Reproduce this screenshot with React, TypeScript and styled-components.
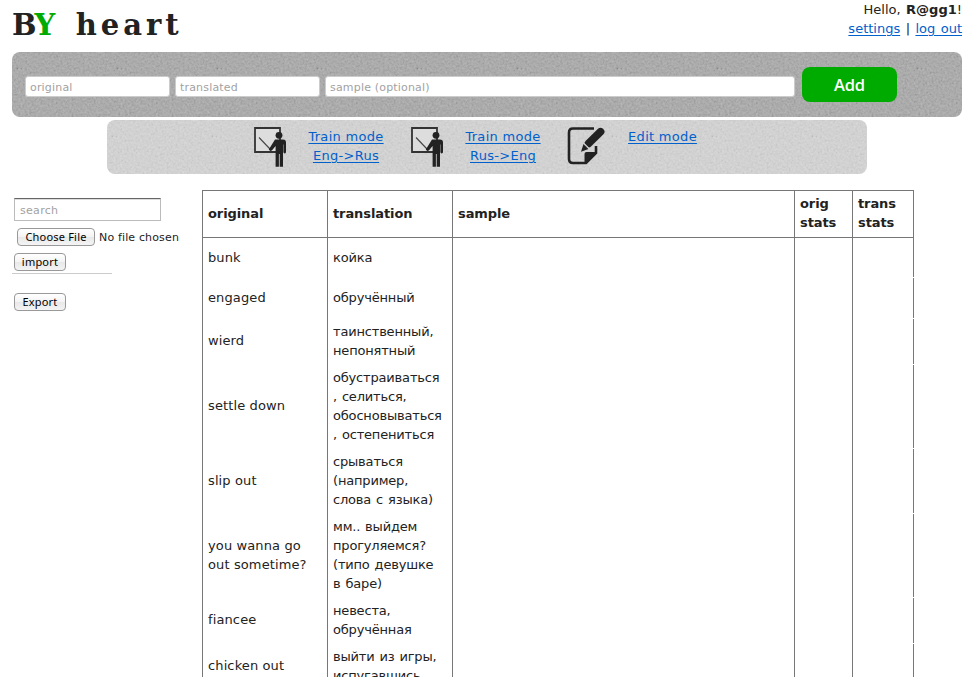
import React from "react";
import styled, { createGlobalStyle } from "styled-components";

const grain = (opacity: number) =>
  `url("data:image/svg+xml,${encodeURIComponent(
    `<svg xmlns='http://www.w3.org/2000/svg' width='100' height='100'><filter id='n' x='0' y='0' width='100%' height='100%'><feTurbulence type='fractalNoise' baseFrequency='0.45' numOctaves='4' seed='8' stitchTiles='stitch'/><feColorMatrix values='0.7 0.7 0 0 -0.25 0.7 0.7 0 0 -0.25 0.7 0.7 0 0 -0.25 0 0 0 0 1'/></filter><rect width='100' height='100' filter='url(#n)' opacity='${opacity}'/></svg>`
  )}")`;

const GlobalStyle = createGlobalStyle`
  * { box-sizing: border-box; }
  html, body { margin: 0; height: 100%; overflow: hidden; background: #fff; }
  body { font: 13px/19px "DejaVu Sans", Verdana, sans-serif; color: #222; }
`;

const Page = styled.div`
  width: 974px;
  height: 677px;
  padding: 0 12px;
  overflow: hidden;
`;

const Header = styled.header`
  display: flex;
  justify-content: space-between;
  height: 52px;
`;

const Logo = styled.h1`
  margin: 0;
  padding-top: 4px;
  display: flex;
  gap: 22px;
  font: bold 29px/42px "DejaVu Serif", serif;
  white-space: pre;
`;

const LogoWord = styled.span<{ $spacing: number }>`
  letter-spacing: ${(p) => p.$spacing}px;
`;

const Accent = styled.span`
  color: #00ab00;
`;

const Account = styled.div`
  text-align: right;
  white-space: nowrap;
  word-spacing: 1.3px;
`;

const Link = styled.a`
  color: #0060cc;
  text-decoration: underline;
  text-underline-offset: 2px;
`;

const AddBar = styled.form`
  display: flex;
  height: 65px;
  padding: 15px 13px;
  border-radius: 8px;
  background: ${grain(0.2)} #a9a9a9;
`;

const Field = styled.input<{ $width: number }>`
  width: ${(p) => p.$width}px;
  height: 21px;
  margin: 9px 5px 0 0;
  padding: 1px 4px 0;
  border: 1px solid #ccc;
  border-radius: 3px;
  background: #fff;
  font: 11px "DejaVu Sans", sans-serif;
  letter-spacing: 0.18px;
  &::placeholder { color: #a2a2a2; opacity: 1; }
`;

const AddButton = styled.button`
  width: 95px;
  height: 35px;
  margin-left: 2px;
  padding: 0;
  border: 0;
  border-radius: 8px;
  background: #00ab00;
  color: #fff;
  font: 600 16.5px "Open Sans", "Noto Sans", sans-serif;
  letter-spacing: -0.2px;
`;

const ModeBar = styled.nav`
  display: flex;
  width: 760px;
  height: 54px;
  margin: 3px auto 0 95px;
  padding: 7px 0 0 147px;
  border-radius: 8px;
  background: ${grain(0.13)} #d6d6d6;
`;

const Mode = styled.div<{ $width: number; $label: number }>`
  display: flex;
  width: ${(p) => p.$width}px;
  letter-spacing: 0.3px;
  svg { flex: none; }
  a { width: ${(p) => p.$label}px; text-align: center; white-space: nowrap; }
`;

const Main = styled.main`
  display: flex;
  padding-top: 16px;
`;

const Sidebar = styled.aside`
  width: 190px;
  padding: 8px 0 0 2px;
`;

const Search = styled.input`
  display: block;
  width: 147px;
  height: 23px;
  padding: 1px 5px 0;
  border: 1px solid #bbb;
  border-top: 1px solid #666;
  box-shadow: inset 0 1px #ddd;
  font: 11px "DejaVu Sans", sans-serif;
  letter-spacing: 0.3px;
  &::placeholder { color: #a2a2a2; opacity: 1; }
`;

const FileRow = styled.div`
  display: flex;
  gap: 4px;
  margin: 7px 0 7px 3px;
  font-size: 11px;
  line-height: 19px;
  height: 18px;
  letter-spacing: 0.15px;
  white-space: nowrap;
`;

const Button = styled.button<{ $width: number }>`
  display: block;
  width: ${(p) => p.$width}px;
  height: 18px;
  padding: 0 0 1px;
  border: 1px solid #999;
  border-radius: 4px;
  background: linear-gradient(#fff, #f3f3f3 50%, #e8e8e8 51%, #f4f4f4);
  color: #000;
  font: 11px/15px "Noto Sans", "DejaVu Sans", sans-serif;
  letter-spacing: 0.2px;
  white-space: nowrap;
`;

const Divider = styled.div`
  width: 100px;
  height: 1px;
  margin: 2px 0 19px -2px;
  background: #ccc;
`;

const WordTable = styled.div`
  width: 712px;
`;

const Cell = styled.div<{ $single?: boolean; $cyrillic?: boolean }>`
  display: flex;
  flex-direction: column;
  justify-content: center;
  padding: 0 0 ${(p) => (p.$single ? 1 : 0)}px 5px;
  border-left: 1px solid #777;
  letter-spacing: ${(p) => (p.$cyrillic ? -0.18 : 0.12)}px;
  word-spacing: ${(p) => (p.$cyrillic ? 1 : 0)}px;
  white-space: nowrap;
`;

const Row = styled.div<{ $height: number; $head?: boolean }>`
  display: grid;
  grid-template-columns: 125px 125px 342px 58px 62px;
  height: ${(p) => p.$height}px;
  font-weight: ${(p) => (p.$head ? "bold" : "normal")};
  border: 0 solid #777;
  border-width: ${(p) => (p.$head ? "1px 0" : "0")};

  ${Cell} {
    ${(p) => (p.$head ? "letter-spacing: -0.1px; padding-bottom: 2px;" : "")}
  }
  /* The outer rule is one pixel short of each row. */
  ${Cell}:last-child {
    background: linear-gradient(#777, #777) right bottom / 1px
      ${(p) => (p.$head ? "100%" : "calc(100% - 1px)")} no-repeat;
  }
  &:nth-child(2) ${Cell}:last-child {
    background-size: 1px 100%;
  }
`;

const Line = styled.span``;

function TeacherIcon() {
  return (
    <svg width="33" height="41" viewBox="0 0 33 41" fill="none">
      <path d="M1 1h25v24H1z" fill="#ddd" stroke="#333" strokeWidth="1.8" />
      <path d="M5 10.500l11 11.500" stroke="#444" strokeWidth="1.100" />
      <circle cx="25" cy="8.300" r="3.400" fill="#222" />
      <path d="M21 12.500h8q3 0 3 3V25q0 1.400-1.300 1.400T29.400 25v-7.500H29v22.300h-3.300V27h-.800v12.800h-3.300V19L18.300 23q-2 2.200-3.500-.400z" fill="#222" />
    </svg>
  );
}

function EditIcon() {
  return (
    <svg width="39" height="39" viewBox="0 0 39 39" fill="none">
      <path d="M27 1.500H6Q2 1.500 2 5.500V32q0 4 4 4h13l10-10V19" stroke="#222" strokeWidth="2.600" />
      <path d="M17.500 37V27q0-2 2-2H30z" fill="#222" />
      <path d="M33.500 4.800L21.500 16.500" stroke="#222" strokeWidth="7.800" strokeLinecap="round" />
      <path d="M16.500 17l5 5-7.500 2.800z" fill="#222" />
      <path d="M15.500 15l8.500 8.500" stroke="#d3d3d3" strokeWidth="1.100" />
    </svg>
  );
}

const words: { height: number; original: string[]; translation: string[] }[] = [
  { height: 39, original: ["bunk"], translation: ["койка"] },
  { height: 41, original: ["engaged"], translation: ["обручённый"] },
  { height: 46, original: ["wierd"], translation: ["таинственный,", "непонятный"] },
  { height: 84, original: ["settle down"], translation: ["обустраиваться", ", селиться,", "обосновываться", ", остепениться"] },
  { height: 65, original: ["slip out"], translation: ["срываться", "(например,", "слова с языка)"] },
  { height: 84, original: ["you wanna go", "out sometime?"], translation: ["мм.. выйдем", "прогуляемся?", "(типо девушке", "в баре)"] },
  { height: 46, original: ["fiancee"], translation: ["невеста,", "обручённая"] },
  { height: 46, original: ["chicken out"], translation: ["выйти из игры,", "испугавшись"] },
];

const headings = [["original"], ["translation"], ["sample"], ["orig", "stats"], ["trans", "stats"]];

const lines = (text: string[]) => text.map((t) => <Line key={t}>{t}</Line>);

export default function App() {
  return (
    <>
      <GlobalStyle />
      <Page>
        <Header>
          <Logo>
            <LogoWord $spacing={-1.5}>B<Accent>Y</Accent></LogoWord>
            <LogoWord $spacing={4}>heart</LogoWord>
          </Logo>
          <Account>
            <div>Hello, <b>R@gg1</b>!</div>
            <div><Link href="#">settings</Link> | <Link href="#">log out</Link></div>
          </Account>
        </Header>
        <AddBar>
          <Field $width={145} placeholder="original" />
          <Field $width={145} placeholder="translated" />
          <Field $width={470} placeholder="sample (optional)" />
          <AddButton type="button">Add</AddButton>
        </AddBar>
        <ModeBar>
          <Mode $width={157} $label={118}>
            <TeacherIcon />
            <Link href="#">Train mode<br />Eng-&gt;Rus</Link>
          </Mode>
          <Mode $width={156} $label={118}>
            <TeacherIcon />
            <Link href="#">Train mode<br />Rus-&gt;Eng</Link>
          </Mode>
          <Mode $width={160} $label={113}>
            <EditIcon />
            <Link href="#">Edit mode</Link>
          </Mode>
        </ModeBar>
        <Main>
          <Sidebar>
            <Search placeholder="search" />
            <FileRow>
              <Button $width={78}>Choose File</Button>
              <span>No file chosen</span>
            </FileRow>
            <Button $width={52}>import</Button>
            <Divider />
            <Button $width={52}>Export</Button>
          </Sidebar>
          <WordTable>
            <Row $height={48} $head>
              {headings.map((h) => <Cell key={h[0]} $single={h.length === 1}>{lines(h)}</Cell>)}
            </Row>
            {words.map((w) => (
              <Row key={w.original[0]} $height={w.height}>
                <Cell $single={w.original.length === 1}>{lines(w.original)}</Cell>
                <Cell $cyrillic $single={w.translation.length === 1}>{lines(w.translation)}</Cell>
                <Cell />
                <Cell />
                <Cell />
              </Row>
            ))}
          </WordTable>
        </Main>
      </Page>
    </>
  );
}
